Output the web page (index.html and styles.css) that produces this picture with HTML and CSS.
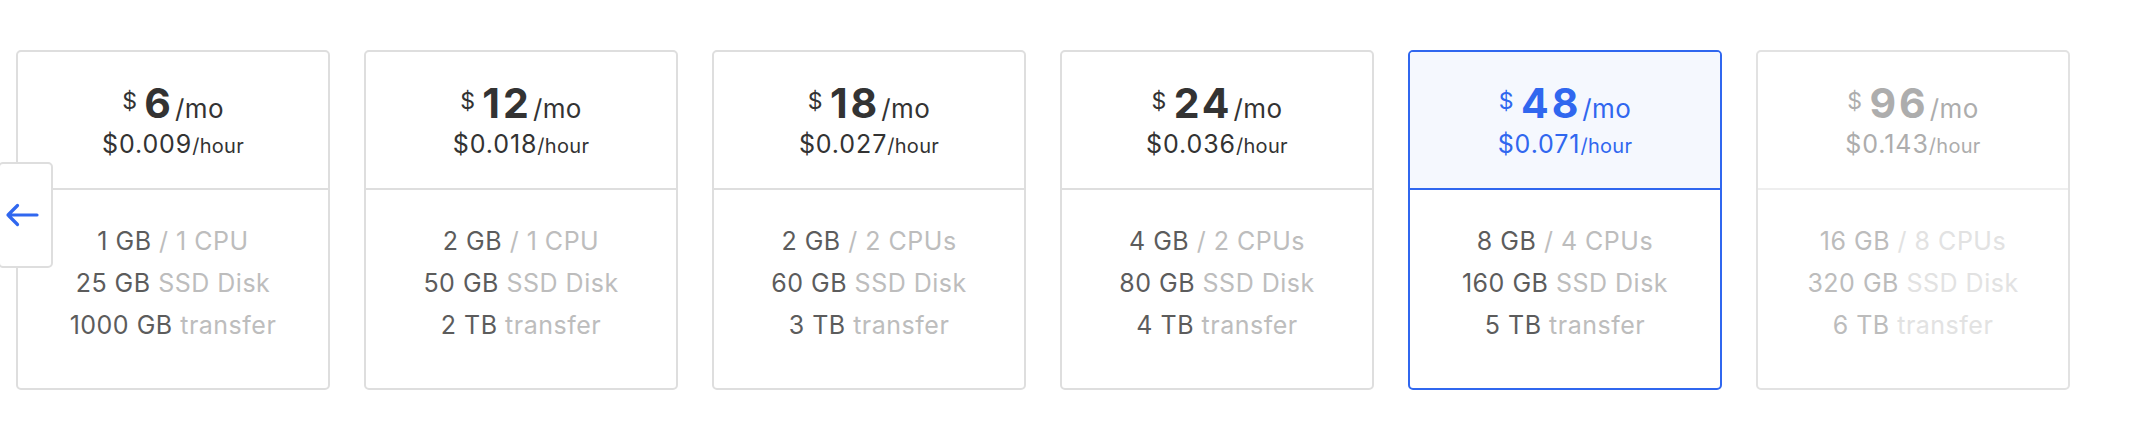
FILE: index.html
```html
<!DOCTYPE html>
<html lang="en">
<head>
<meta charset="utf-8">
<title>Plans</title>
<link rel="stylesheet" href="styles.css">
</head>
<body>
<div class="slider">
  <button class="nav-prev" aria-label="Previous">
    <svg width="40" height="30" viewBox="0 0 40 30"><path d="M37 15H8M17.5 5.5L8 15l9.5 9.5" fill="none" stroke="#3067ef" stroke-width="3.2" stroke-linecap="round" stroke-linejoin="round"/></svg>
  </button>
  <div class="track">
    <div class="plan">
      <div class="plan-head">
        <div class="price"><span class="cur">$</span><span class="amt">6</span><span class="per">/mo</span></div>
        <div class="hourly">$0.009<span class="per-h">/hour</span></div>
      </div>
      <div class="plan-body">
        <div class="spec">1 GB <span class="lt">/ 1 CPU</span></div>
        <div class="spec">25 GB <span class="lt">SSD Disk</span></div>
        <div class="spec">1000 GB <span class="lt">transfer</span></div>
      </div>
    </div>
    <div class="plan">
      <div class="plan-head">
        <div class="price"><span class="cur">$</span><span class="amt">12</span><span class="per">/mo</span></div>
        <div class="hourly">$0.018<span class="per-h">/hour</span></div>
      </div>
      <div class="plan-body">
        <div class="spec">2 GB <span class="lt">/ 1 CPU</span></div>
        <div class="spec">50 GB <span class="lt">SSD Disk</span></div>
        <div class="spec">2 TB <span class="lt">transfer</span></div>
      </div>
    </div>
    <div class="plan">
      <div class="plan-head">
        <div class="price"><span class="cur">$</span><span class="amt">18</span><span class="per">/mo</span></div>
        <div class="hourly">$0.027<span class="per-h">/hour</span></div>
      </div>
      <div class="plan-body">
        <div class="spec">2 GB <span class="lt">/ 2 CPUs</span></div>
        <div class="spec">60 GB <span class="lt">SSD Disk</span></div>
        <div class="spec">3 TB <span class="lt">transfer</span></div>
      </div>
    </div>
    <div class="plan">
      <div class="plan-head">
        <div class="price"><span class="cur">$</span><span class="amt">24</span><span class="per">/mo</span></div>
        <div class="hourly">$0.036<span class="per-h">/hour</span></div>
      </div>
      <div class="plan-body">
        <div class="spec">4 GB <span class="lt">/ 2 CPUs</span></div>
        <div class="spec">80 GB <span class="lt">SSD Disk</span></div>
        <div class="spec">4 TB <span class="lt">transfer</span></div>
      </div>
    </div>
    <div class="plan selected">
      <div class="plan-head">
        <div class="price"><span class="cur">$</span><span class="amt">48</span><span class="per">/mo</span></div>
        <div class="hourly">$0.071<span class="per-h">/hour</span></div>
      </div>
      <div class="plan-body">
        <div class="spec">8 GB <span class="lt">/ 4 CPUs</span></div>
        <div class="spec">160 GB <span class="lt">SSD Disk</span></div>
        <div class="spec">5 TB <span class="lt">transfer</span></div>
      </div>
    </div>
    <div class="plan disabled">
      <div class="plan-head">
        <div class="price"><span class="cur">$</span><span class="amt">96</span><span class="per">/mo</span></div>
        <div class="hourly">$0.143<span class="per-h">/hour</span></div>
      </div>
      <div class="plan-body">
        <div class="spec">16 GB <span class="lt">/ 8 CPUs</span></div>
        <div class="spec">320 GB <span class="lt">SSD Disk</span></div>
        <div class="spec">6 TB <span class="lt">transfer</span></div>
      </div>
    </div>
  </div>
</div>
</body>
</html>
```

FILE: styles.css
```css
* { box-sizing: border-box; }
html, body { margin: 0; padding: 0; background: #ffffff; }
body { font-family: Inter, "Noto Sans", sans-serif; color: #333333; }

.slider {
  position: relative;
  width: 2132px;
  height: 446px;
  overflow: hidden;
}

.track {
  display: flex;
  gap: 34px;
  padding: 50px 0 0 16px;
}

.plan {
  flex: 0 0 314px;
  width: 314px;
  height: 340px;
  border: 2px solid #dedede;
  border-radius: 5px;
  display: flex;
  flex-direction: column;
  overflow: hidden;
}

.plan-head {
  height: 138px;
  border-bottom: 2px solid #dedede;
  display: flex;
  flex-direction: column;
  align-items: center;
  padding-top: 30px;
}

.price {
  line-height: 42px;
  height: 42px;
  color: #333333;
  white-space: nowrap;
  letter-spacing: 0.4px;
}
.cur {
  font-size: 23px;
  position: relative;
  top: -9px;
  margin-right: 7px;
}
.amt {
  font-size: 41px;
  font-weight: 700;
  letter-spacing: 3px;
  margin-right: 1px;
}
.per {
  font-size: 26px;
}

.hourly {
  margin-top: 5px;
  font-size: 25px;
  line-height: 30px;
  color: #333333;
  letter-spacing: 0.9px;
}
.per-h {
  font-size: 20px;
  letter-spacing: 0.3px;
}

.plan-body {
  flex: 1;
  display: flex;
  flex-direction: column;
  align-items: center;
  padding-top: 30px;
}
.spec {
  font-size: 25px;
  line-height: 42px;
  color: #5c5c5c;
  letter-spacing: 0.5px;
  white-space: nowrap;
}
.lt { color: #bdbdbd; }

.plan.selected { border-color: #3067ef; }
.plan.selected .plan-head {
  background: #f5f8fe;
  border-bottom-color: #3067ef;
}
.plan.selected .price,
.plan.selected .hourly { color: #3067ef; }

.plan.disabled { border-color: #e2e2e2; }
.plan.disabled .plan-head { border-bottom-color: #eeeeee; }
.plan.disabled .price,
.plan.disabled .hourly { color: #adadad; }
.plan.disabled .spec { color: #bcbcbc; }
.plan.disabled .lt { color: #e2e2e2; }

.nav-prev {
  position: absolute;
  left: -2px;
  top: 162px;
  width: 55px;
  height: 106px;
  padding: 0;
  background: #ffffff;
  border: 2px solid #dedede;
  border-radius: 5px;
  display: flex;
  align-items: center;
  justify-content: flex-start;
  cursor: pointer;
}
.nav-prev svg {
  display: block;
  margin-left: 0;
}
```
